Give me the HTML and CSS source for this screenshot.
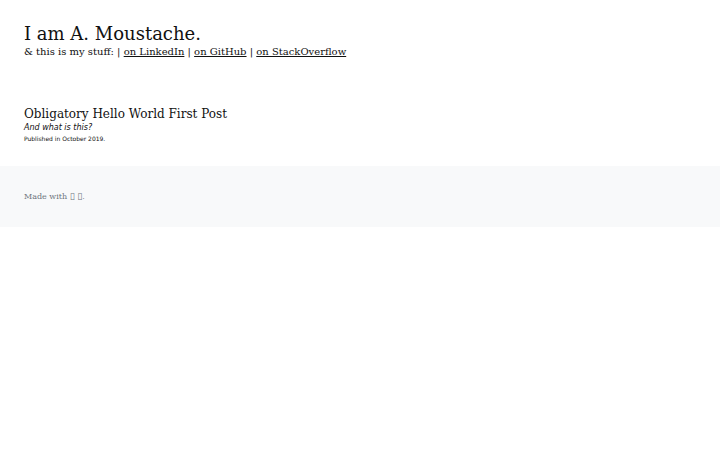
FILE: index.html
```html
<!DOCTYPE html>
<html>
<head>
<meta charset="utf-8">
<link rel="stylesheet" href="styles.css">
</head>
<body>
<header class="site-header">
  <h1 class="site-title">I am A. Moustache.</h1>
  <p class="site-links">&amp; this is my stuff: | <a href="#">on LinkedIn</a> | <a href="#">on GitHub</a> | <a href="#">on StackOverflow</a></p>
</header>
<main class="posts">
  <article class="post">
    <h2 class="post-title">Obligatory Hello World First Post</h2>
    <p class="post-sub">And what is this?</p>
    <p class="post-date">Published in October 2019.</p>
  </article>
</main>
<footer class="site-footer">
  <p class="footer-text">Made with <span class="tofu">▯</span> <span class="tofu">▯</span>.</p>
</footer>
</body>
</html>
```

FILE: styles.css
```css
html, body { margin: 0; padding: 0; background: #fff; }
body { font-family: "DejaVu Serif", serif; color: #111; }
.site-header { padding: 23px 24px 0; }
.site-title { margin: 0; font-size: 18px; font-weight: normal; line-height: 22px; color: #111; }
.site-links { margin: 0; font-size: 10px; line-height: 13px; color: #111; }
.site-links a { color: #111; text-decoration: underline; }
.posts { padding: 49px 24px 22px; }
.post-title { margin: 0; font-size: 12px; font-weight: normal; line-height: 15px; color: #111; }
.post-sub { margin: 0; font-family: "DejaVu Sans", sans-serif; font-style: italic; font-size: 8px; line-height: 12px; }
.post-date { margin: 0; font-family: "DejaVu Sans", sans-serif; font-size: 6px; line-height: 10px; }
.site-footer { background: #f8f9fa; padding: 25px 24px 25px; }
.footer-text { margin: 0; font-size: 8px; line-height: 11px; color: #6c757d; }
.tofu { font-family: "DejaVu Sans", sans-serif; font-size: 9px; }
```
